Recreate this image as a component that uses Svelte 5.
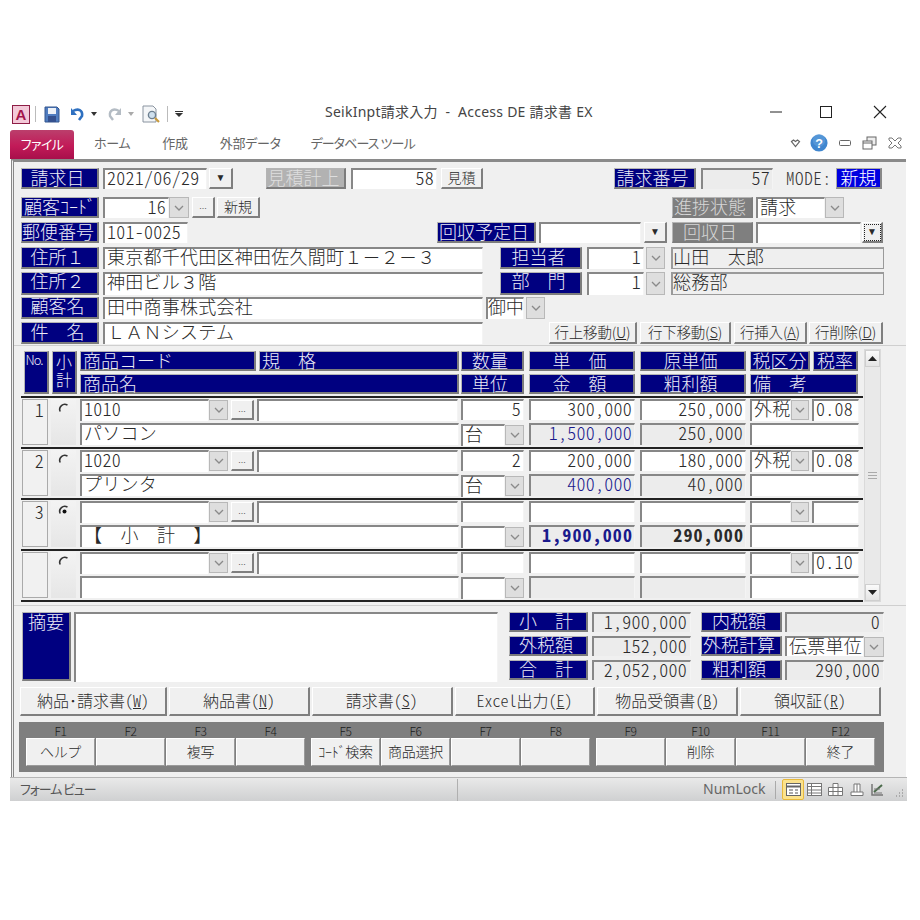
<script>
  const rows = [
    { no: '1', code: '1010', name: 'パソコン', qty: '5', unit: '台', price: '300,000', cost: '250,000', amount: '1,500,000', gross: '250,000', tax: '外税', rate: '0.08' },
    { no: '2', code: '1020', name: 'プリンタ', qty: '2', unit: '台', price: '200,000', cost: '180,000', amount: '400,000', gross: '40,000', tax: '外税', rate: '0.08' },
    { no: '3', code: '', name: '【　小　計　】', qty: '', unit: '', price: '', cost: '', amount: '1,900,000', gross: '290,000', tax: '', rate: '', sub: true, on: true },
    { no: '', code: '', name: '', qty: '', unit: '', price: '', cost: '', amount: '', gross: '', tax: '', rate: '0.10' }
  ];
  const prints = [
    { t: '納品･請求書', k: 'W' }, { t: '納品書', k: 'N' }, { t: '請求書', k: 'S' },
    { t: 'Excel出力', k: 'E' }, { t: '物品受領書', k: 'B' }, { t: '領収証', k: 'R' }
  ];
  const fkeys = [
    [['F1', 'ヘルプ'], ['F2', ''], ['F3', '複写'], ['F4', '']],
    [['F5', 'ｺｰﾄﾞ検索'], ['F6', '商品選択'], ['F7', ''], ['F8', '']],
    [['F9', ''], ['F10', '削除'], ['F11', ''], ['F12', '終了']]
  ];
</script>

{#snippet dd()}
  <span class="dd"><svg width="10" height="6" viewBox="0 0 10 6"><path d="M1 1l4 4 4-4" fill="none" stroke="#8a8a8a" stroke-width="1.3"/></svg></span>
{/snippet}
{#snippet radio(on)}
  <svg class="radio" width="12" height="12" viewBox="0 0 12 12">
    <path d="M9.5 2.2A5 5 0 0 0 2.2 8.5" fill="none" stroke="#333" stroke-width="1.6"/>
    {#if on}<circle cx="6.5" cy="6.5" r="2" fill="#111"/>{/if}
  </svg>
{/snippet}
{#snippet dots()}
  <span class="btn small">...</span>
{/snippet}

<div class="win">
  <header class="title">
    <div class="qat">
      <span class="appicon">A</span>
      <i class="qsep"></i>
      <svg width="16" height="17" viewBox="0 0 16 17"><path d="M1 1h12l2 2v13H1z" fill="#4f7cc0" stroke="#34568e"/><rect x="4" y="2" width="8" height="6" fill="#eef2f8"/><rect x="4" y="10" width="8" height="6" fill="#34508e"/></svg>
      <svg class="undo" width="15" height="14" viewBox="0 0 15 14"><path d="M3 4c5-3 10-1 9 5l-3 4" fill="none" stroke="#2e70c0" stroke-width="2.6"/><path d="M1 1v7h6z" fill="#2e70c0"/></svg>
      <svg class="tri" width="6" height="4" viewBox="0 0 6 4"><path d="M0 0h6L3 4z" fill="#333"/></svg>
      <svg class="redo" width="15" height="14" viewBox="0 0 15 14"><path d="M12 4C7 1 2 3 3 9l3 4" fill="none" stroke="#b4bcc4" stroke-width="2.4"/><path d="M14 1v7H8z" fill="#b4bcc4"/></svg>
      <svg class="tri light" width="6" height="4" viewBox="0 0 6 4"><path d="M0 0h6L3 4z" fill="#aaa"/></svg>
      <svg class="prev" width="19" height="18" viewBox="0 0 19 18"><path d="M1 1h10l3 3v13H1z" fill="#f4f6f8" stroke="#8a94a0"/><circle cx="10" cy="10" r="3.6" fill="#cfe0ee" stroke="#6d7f90" stroke-width="1.4"/><path d="M13 13l4 4" stroke="#c89a3c" stroke-width="2.2"/></svg>
      <i class="qsep two"></i>
      <svg class="more" width="8" height="6" viewBox="0 0 8 6"><path d="M0 0h8v1H0zM0 2h8L4 6z" fill="#333"/></svg>
    </div>
    <span class="caption">SeikInpt請求入力&nbsp; - &nbsp;Access DE 請求書 EX</span>
    <div class="wctl">
      <svg width="14" height="14" viewBox="0 0 14 14"><path d="M1 7h12" stroke="#222"/></svg>
      <svg width="14" height="14" viewBox="0 0 14 14"><rect x="1.5" y="1.5" width="11" height="11" fill="none" stroke="#222"/></svg>
      <svg width="14" height="14" viewBox="0 0 14 14"><path d="M1 1l12 12M13 1L1 13" stroke="#222" stroke-width="1.1"/></svg>
    </div>
  </header>

  <nav class="tabs">
    <span class="file">ファイル</span>
    <span class="tab t1">ホーム</span><span class="tab t2">作成</span><span class="tab t3">外部データ</span><span class="tab t4">データベース ツール</span>
    <div class="mctl">
      <svg class="heart" width="11" height="9" viewBox="0 0 11 9"><path d="M1.5 2.5 3.5 1 5.5 2.5 7.500 1 9.500 2.500 5.500 7.500z" fill="#fff" stroke="#666" stroke-width="1.2"/></svg>
      <svg class="help" width="18" height="18" viewBox="0 0 20 20"><circle cx="10" cy="10" r="9.500" fill="#3f86cf"/><circle cx="10" cy="7" r="7" fill="#6aa6e0" opacity=".5"/><text x="10" y="15" text-anchor="middle" font-size="14" font-weight="700" fill="#fff" font-family="Liberation Sans">?</text></svg>
      <svg width="12" height="8" viewBox="0 0 12 8"><rect x=".5" y="1.500" width="11" height="5" rx="1" fill="#fff" stroke="#666"/></svg>
      <svg width="15" height="14" viewBox="0 0 15 14"><rect x="5" y="1" width="9" height="8" fill="#eee" stroke="#666"/><rect x="1" y="5" width="9" height="8" fill="#fff" stroke="#666"/><path d="M1 7h9" stroke="#666"/></svg>
      <svg width="14" height="12" viewBox="0 0 14 12"><path d="M1 1h3l3 3 3-3h3v2l-3 3 3 3v2h-3L7 8l-3 3H1V9l3-3-3-3z" fill="#fff" stroke="#777"/></svg>
    </div>
  </nav>

  <main class="form">
    <section class="head">
      <div class="row r1">
        <span class="lbl">請求日</span><i></i><span class="inp">2021/06/29</span><i></i><span class="btn arrow">▼</span><i></i>
        <span class="lbl faint">見積計上</span><i></i><span class="inp right">58</span><i></i><span class="btn b14">見積</span><i></i>
        <span class="lbl">請求番号</span><i></i><span class="inp right grayf">57</span><i></i><span class="mode">MODE:</span><i></i><span class="lbl bright">新規</span>
      </div>
      <div class="row r2">
        <span class="lbl hw">顧客ｺｰﾄﾞ</span><i></i><span class="inp right">16</span>{@render dd()}<i></i>{@render dots()}<i></i><span class="btn b14">新規</span><i></i>
        <span class="lbl gray">進捗状態</span><i></i><span class="inp">請求</span>{@render dd()}
      </div>
      <div class="row r3">
        <span class="lbl">郵便番号</span><i></i><span class="inp">101-0025</span><i></i>
        <span class="lbl">回収予定日</span><i></i><span class="inp"></span><i></i><span class="btn arrow">▼</span><i></i>
        <span class="lbl gray">回収日</span><i></i><span class="inp"></span><i></i><span class="btn arrow focus">▼</span>
      </div>
      <div class="row r4">
        <span class="lbl">住所１</span><i></i><span class="inp fw">東京都千代田区神田佐久間町１－２－３</span><i></i>
        <span class="lbl">担当者</span><i></i><span class="inp right">1</span><i></i>{@render dd()}<i></i><span class="ro">山田　太郎</span>
      </div>
      <div class="row r4">
        <span class="lbl">住所２</span><i></i><span class="inp fw">神田ビル３階</span><i></i>
        <span class="lbl">部　門</span><i></i><span class="inp right">1</span><i></i>{@render dd()}<i></i><span class="ro">総務部</span>
      </div>
      <div class="row r6">
        <span class="lbl">顧客名</span><i></i><span class="inp fw">田中商事株式会社</span><i></i><span class="inp tight">御中</span><i></i>{@render dd()}
      </div>
      <div class="row r7">
        <span class="lbl">件　名</span><i></i><span class="inp fw">ＬＡＮシステム</span><i></i>
        <span class="btn b15">行上移動(<u>U</u>)</span><i></i><span class="btn b15">行下移動(<u>S</u>)</span><i></i><span class="btn b15">行挿入(<u>A</u>)</span><i></i><span class="btn b15">行削除(<u>D</u>)</span>
      </div>
    </section>

    <section class="detail">
      <div class="table">
        <div class="thead">
          <span class="lbl no">No.</span>
          <span class="lbl sk">小<br>計</span>
          <div class="cA">
            <div class="pair"><span class="lbl left codeh">商品コード</span><span class="lbl left spech">規　格</span></div>
            <span class="lbl left">商品名</span>
          </div>
          <div class="cQ"><span class="lbl">数量</span><span class="lbl">単位</span></div>
          <div class="cP"><span class="lbl">単　価</span><span class="lbl">金　額</span></div>
          <div class="cC"><span class="lbl">原単価</span><span class="lbl">粗利額</span></div>
          <div class="cT">
            <div class="pair"><span class="lbl taxh">税区分</span><span class="lbl rateh">税率</span></div>
            <span class="lbl left">備　考</span>
          </div>
        </div>

        {#each rows as r}
          <div class="trow">
            <span class="nobox">{r.no}</span>
            <span class="rad">{@render radio(r.on)}</span>
            <div class="cA">
              <div class="line">
                <span class="inp code">{r.code}</span>{@render dd()}{@render dots()}<span class="inp spec"></span>
              </div>
              <span class="inp fw">{r.name}</span>
            </div>
            <div class="cQ">
              <span class="inp right">{r.qty}</span>
              <div class="line"><span class="inp fill">{r.unit}</span>{@render dd()}</div>
            </div>
            <div class="cP">
              <span class="inp right">{r.price}</span>
              <span class="inp right grayf navy" class:bold={r.sub}>{r.amount}</span>
            </div>
            <div class="cC">
              <span class="inp right">{r.cost}</span>
              <span class="inp right grayf" class:bold={r.sub}>{r.gross}</span>
            </div>
            <div class="cT">
              <div class="line"><span class="inp tax">{r.tax}</span>{@render dd()}<span class="inp rate">{r.rate}</span></div>
              <span class="inp"></span>
            </div>
          </div>
        {/each}
      </div>
      <div class="scroll">
        <span class="sbtn"><svg width="9" height="5" viewBox="0 0 9 5"><path d="M0 5L4.500 0 9 5z" fill="#222"/></svg></span>
        <span class="grip"><b></b><b></b><b></b></span>
        <span class="sbtn"><svg width="9" height="5" viewBox="0 0 9 5"><path d="M0 0L4.500 5 9 0z" fill="#222"/></svg></span>
      </div>
    </section>

    <section class="foot">
      <span class="lbl memo">摘要</span>
      <span class="inp memotext"></span>
      <div class="sum">
        <span class="lbl">小　計</span><i></i><span class="inp right grayf">1,900,000</span><i></i><span class="lbl">内税額</span><i></i><span class="inp right grayf">0</span>
        <span class="lbl">外税額</span><i></i><span class="inp right grayf">152,000</span><i></i><span class="lbl">外税計算</span><i></i><div class="line"><span class="inp fill">伝票単位</span>{@render dd()}</div>
        <span class="lbl">合　計</span><i></i><span class="inp right grayf">2,052,000</span><i></i><span class="lbl">粗利額</span><i></i><span class="inp right grayf">290,000</span>
      </div>
    </section>

    <div class="prints">
      {#each prints as p}
        <span class="btn b16">{p.t}(<u>{p.k}</u>)</span>
      {/each}
    </div>

    <div class="fkeys">
      {#each fkeys as group}
        <div class="fgroup">
          {#each group as [k, t]}
            <div class="fkey"><small>{k}</small><span class="btn fb">{t}</span></div>
          {/each}
        </div>
      {/each}
    </div>
  </main>

  <footer class="status">
    <span class="stext">フォーム ビュー</span>
    <i class="ssep"></i>
    <span class="num">NumLock</span>
    <i class="ssep2"></i>
    <div class="views">
      <span class="vw active"><svg width="15" height="13" viewBox="0 0 15 13"><rect x=".5" y=".5" width="14" height="12" fill="#fff" stroke="#666"/><path d="M.5 3.500h14" stroke="#666" stroke-width="2"/><path d="M3 7h4M9 7h3M3 10h4M9 10h3" stroke="#555"/></svg></span>
      <span class="vw"><svg width="15" height="13" viewBox="0 0 15 13"><rect x=".5" y=".5" width="14" height="12" fill="#fff" stroke="#777"/><path d="M.5 3.500h14M.5 7h14M.5 10h14M4.500 1v11" stroke="#777"/></svg></span>
      <span class="vw"><svg width="15" height="13" viewBox="0 0 15 13"><path d="M5 .5h5v4h4.500v8H.5v-8H5zM.5 8.500h14M5 4.500h5M5 4.500v8M10 4.500v8" fill="#fff" stroke="#777"/></svg></span>
      <span class="vw"><svg width="14" height="13" viewBox="0 0 14 13"><path d="M1 12.500V9h3V1h6v8h3v3.500zM4 9h6M7 1v8" fill="#fff" stroke="#777"/></svg></span>
      <span class="vw"><svg width="15" height="13" viewBox="0 0 15 13"><path d="M2 1v11h11" fill="none" stroke="#777" stroke-width="1.500"/><path d="M4 9l8-7" stroke="#4a6a4a" stroke-width="2"/><path d="M4 6h6M4 10h8" stroke="#777"/></svg></span>
    </div>
    <svg class="resize" width="10" height="12" viewBox="0 0 10 12"><path d="M8 2h1M5 5h1M8 5h1M2 8h1M5 8h1M8 8h1" stroke="#aaa" stroke-width="2"/></svg>
  </footer>
</div>

<style>
  :global(body) { background: #fff; margin: 0; }
  .win {
    --jp: "Noto Sans CJK JP", sans-serif;
    margin: 100px 0 0 10px;
    width: 897px;
    height: 701px;
    display: flex;
    flex-direction: column;
    font-family: var(--jp);
  }
  i { display: block; }

  .title { height: 28px; display: flex; align-items: center; position: relative; background: #fff; }
  .qat { display: flex; align-items: center; padding-left: 2px; }
  .appicon {
    width: 16px; height: 17px; border: 1px solid #8e1d46; background: #f3c9d8; color: #a3154c;
    font: 700 15px/17px "Liberation Sans", sans-serif; text-align: center;
  }
  .qsep { width: 1px; height: 16px; background: #bbb; margin: 0 8px 0 5px; }
  .qsep.two { margin: 0 5px 0 6px; }
  .undo { margin-left: 10px; }
  .tri { margin-left: 6px; }
  .redo { margin-left: 10px; }
  .prev { margin-left: 8px; }
  .tri.light { margin-left: 6px; }
  .more { margin-left: 2px; }
  .caption {
    position: absolute; left: 315px; top: 2px; font: 14px/20px "Noto Sans", "Noto Sans CJK JP", sans-serif; color: #444;
    letter-spacing: .25px; white-space: nowrap;
  }
  .wctl { position: absolute; right: 20px; top: 5px; display: flex; gap: 40px; }
  .wctl svg:first-child { margin-right: -4px; }

  .tabs { height: 31px; display: flex; align-items: center; position: relative; font-size: 13px; color: #666; font-feature-settings: "palt"; letter-spacing: -.3px; background: #fff; }
  .file {
    width: 64px; height: 29px; margin-top: 2px; border-radius: 3px 3px 0 0; color: #fff; font-size: 13px; line-height: 28px; text-align: center;
    background: linear-gradient(#bb3f6c, #c21a58 55%, #a80f4b); letter-spacing: -.6px;
  }
  .tab { margin-bottom: 2px; }
  .t1 { margin-left: 20px; }
  .t2 { margin-left: 32px; }
  .t3 { margin-left: 32px; }
  .t4 { margin-left: 30px; letter-spacing: -.9px; }
  .mctl { position: absolute; left: 780px; top: 6px; display: flex; align-items: center; gap: 11px; width: 114px; }
  .heart { margin-right: -2px; }

  .form {
    height: 618px; margin-left: 1px; border-top: 3px solid #8a8a8a; border-left: 3px double #888; background: #f0f0f0;
    color: #2a2a2a; font-size: 18px; line-height: 17px; letter-spacing: .25px; font-weight: 300;
    box-sizing: border-box; width: 895px;
  }
  .head { padding-left: 7px; height: 184px; border-bottom: 1px solid #cfcfcf; box-sizing: border-box; display: flex; flex-direction: column; }
  .row { display: grid; height: 21px; margin-top: 4px; }
  .r1 { margin-top: 6px; grid-template-columns: 78px 4px 104px 2px 24px 33px 80px 5px 86px 4px 42px 131px 82px 5px 72px 13px 47px 3px 46px; }
  .r2 { margin-top: 8px; grid-template-columns: 78px 4px 66px 20px 3px 23px 2px 43px 412px 81px 3px 69px 19px; }
  .r3 { grid-template-columns: 78px 4px 85px 249px 99px 3px 102px 3px 23px 5px 81px 3px 105px 1px 21px; }
  .r4 { height: 22px; grid-template-columns: 78px 4px 380px 17px 82px 5px 57px 2px 19px 6px 213px; }
  .r4 + .r4 { margin-top: 3px; height: 23px; }
  .r6 { height: 22px; margin-top: 2px; grid-template-columns: 78px 4px 380px 3px 38px 2px 19px; }
  .r7 { height: 22px; margin-top: 3px; grid-template-columns: 78px 4px 380px 66px 88px 3px 91px 3px 73px 2px 74px; }

  .lbl {
    background: #000080; color: #ececf6; text-align: center; white-space: nowrap;
    border-style: solid; border-width: 1px 2px 2px 1px; border-color: #b4b4b4 #7c7c7c #7c7c7c #b4b4b4;
    box-sizing: border-box; line-height: 16px; min-width: 0; letter-spacing: 0; padding-right: 4px;
  }
  .lbl.left { text-align: left; padding: 0 0 0 2px; }
  .lbl.gray { background: #7f7f7f; color: #d6d6d6; }
  .lbl.faint { background: #b2b2b2; color: #dedede; }
  .lbl.bright { background: #0000e0; color: #fff; border-color: #aaa #888 #888 #aaa; padding: 0; }
  .lbl.hw { text-align: left; padding: 0 0 0 2px; }

  .inp {
    background: #fff; border-style: solid; border-width: 2px 0 0 2px; border-color: #878787; box-sizing: border-box;
    padding-left: 2px; white-space: nowrap; line-height: 15px; min-width: 0; display: block; border-right: 1px solid #f4f4f4;
    font-feature-settings: "hwid";
  }
  .fw { font-feature-settings: normal; }
  .r4 + .r4 .inp, .r6 .inp { line-height: 14px; }
  .r4 + .r4 .lbl, .r6 .lbl, .sum .lbl { line-height: 15px; }
  .tight { padding-left: 0; letter-spacing: -.3px; }
  .right { text-align: right; padding: 0 2px 0 0; }
  .grayf { background: #ececec; }
  .navy { color: #1a1a8c; }
  .inp.bold { font-weight: 700; letter-spacing: 1.1px; padding-right: 1px; }
  .mode { font-size: 17px; line-height: 19px; white-space: nowrap; letter-spacing: .6px; font-feature-settings: "hwid"; color: #333; }
  .ro { border: 1px solid #9a9a9a; border-width: 2px 1px 1px 2px; box-sizing: border-box; background: #efefef; padding-left: 0; white-space: nowrap; line-height: 15px; }

  .btn {
    background: #f0f0f0; border-style: solid; border-width: 1px 2px 2px 1px; border-color: #fff #7f7f7f #7f7f7f #fff; box-sizing: border-box;
    text-align: center; white-space: nowrap; letter-spacing: 0; display: block; min-width: 0;
  }
  .arrow { font-size: 10px; line-height: 17px; font-family: "DejaVu Sans", sans-serif; }
  .focus { outline: 1px dotted #222; outline-offset: -3px; }
  .b14 { font-size: 14px; line-height: 16px; }
  .b15 { font-size: 14.500px; line-height: 17px; letter-spacing: -.2px; font-feature-settings: normal; }
  .b16 { font-size: 16px; line-height: 24px; flex: 1; font-feature-settings: "hwid"; }
  .small { font-size: 10px; line-height: 14px; color: #555; width: 23px; flex: none; }

  .dd {
    background: #dedede; border: 1px solid #b8b8b8; box-sizing: border-box; display: flex; align-items: center; justify-content: center; flex: none; width: 20px;
  }
  .r2 .dd, .r4 .dd, .r6 .dd { width: 100%; }

  .detail { display: flex; height: 259px; padding-left: 7px; box-sizing: border-box; }
  .table { width: 842px; }
  .thead { display: flex; padding: 5px 0 0 3px; box-sizing: border-box; height: 50px; }
  .thead .lbl { height: 20px; }
  .cA, .cQ, .cP, .cC, .cT { display: flex; flex-direction: column; justify-content: space-between; box-sizing: border-box; }
  .thead .cA, .thead .cQ, .thead .cP, .thead .cC, .thead .cT { height: 43px; }
  .cA { width: 379px; margin-left: 3px; }
  .cQ { width: 63px; margin-left: 2px; }
  .cP { width: 106px; margin-left: 5px; }
  .cC { width: 106px; margin-left: 5px; }
  .cT { width: 109px; margin-left: 4px; }
  .thead .cT { width: 108px; }
  .pair { display: flex; justify-content: space-between; }
  .codeh { width: 176px; }
  .spech { width: 200px; }
  .taxh { width: 60px; padding: 0; }
  .rateh { width: 45px; padding: 0; }
  .thead .lbl.no { width: 25px; height: 43px; font-size: 13px; letter-spacing: -1px; padding-right: 4px; line-height: 16px; }
  .thead .lbl.sk { width: 25px; height: 43px; margin-left: 3px; font-size: 16px; line-height: 18px; padding: 0; }

  .trow { display: flex; height: 51px; border-top: 2px solid #222; padding: 1px 0 0 1px; box-sizing: border-box; }
  .trow:last-child { height: 53px; border-bottom: 2px solid #222; }
  .nobox { width: 26px; height: 46px; box-sizing: border-box; border: 1px solid #aaa; background: #f1f1f1; text-align: right; padding-right: 3px; line-height: 18px; font-feature-settings: "hwid"; }
  .rad { width: 25px; height: 46px; margin-left: 3px; background: linear-gradient(#f3f3f3, #e6e6e6); padding: 4px 0 0 7px; box-sizing: border-box; }
  .radio { display: block; }
  .trow .cA { width: 379px; margin-left: 4px; }
  .trow .cA, .trow .cQ, .trow .cP, .trow .cC, .trow .cT { height: 46px; }
  .trow .inp { height: 22px; }
  .trow .cQ > .inp:first-child, .trow .cP > .inp:first-child, .trow .cC > .inp:first-child { height: 21px; }
  .line { display: flex; min-width: 0; height: 21px; }
  .line .dd { height: 20px; margin-top: 1px; }
  .code { width: 129px; }
  .line .small { margin: 1px 3px 0 3px; height: 20px; }
  .spec { width: 201px; }
  .fill { flex: 1; }
  .tax { width: 41px; }
  .line .dd { width: 19px; flex: none; }
  .trow .cT .dd { width: 18px; }
  .rate { margin-left: 3px; width: 47px; }

  .scroll { width: 17px; margin: 3px 0 0 1px; height: 253px; background: #e9e9e9; display: flex; flex-direction: column; justify-content: space-between; align-items: stretch; box-sizing: border-box; border: 1px solid #dadada; }
  .sbtn { height: 17px; background: linear-gradient(#fbfbfb, #e4e4e4); border: 1px solid #cfcfcf; box-sizing: border-box; display: flex; align-items: center; justify-content: center; }
  .grip { display: flex; flex-direction: column; gap: 2px; padding: 0 3px; }
  .grip b { height: 1px; background: #aaa; }

  .foot { display: flex; padding: 6px 0 0 8px; height: 77px; box-sizing: border-box; border-top: 1px solid #cfcfcf; }
  .memo { width: 49px; height: 69px; padding: 0; }
  .memotext { width: 424px; height: 70px; margin-left: 3px; }
  .sum { display: grid; margin-left: 11px; grid-template-columns: 79px 4px 99px 10px 81px 3px 99px; grid-template-rows: repeat(3, 20px); row-gap: 4px; }
  .sum .line { height: 20px; }
  .sum .dd { width: 20px; }
  .sum .right { padding-right: 3px; }

  .prints { display: flex; gap: 2px; padding: 5px 0 0 6px; width: 867px; height: 40px; box-sizing: border-box; align-items: flex-start; }
  .prints .btn { height: 29px; background: #f0f0f0; }
  .prints .btn:first-child { flex: none; width: 147px; }

  .fkeys { margin: 0 0 0 5px; width: 865px; height: 50px; background: #7f7f7f; display: flex; padding: 1px 0 0 7px; box-sizing: border-box; gap: 6px; }
  .fgroup { display: flex; gap: 1px; }
  .fkey { width: 69px; display: flex; flex-direction: column; align-items: stretch; }
  .fkey small { font-size: 12px; line-height: 15px; text-align: center; color: #1a1a1a; letter-spacing: -.3px; }
  .fb { height: 28px; font-size: 14px; line-height: 24px; border-width: 1px; border-color: #fff #9a9a9a #9a9a9a #fff; letter-spacing: -.3px; }

  .status {
    height: 24px; display: flex; align-items: center; background: linear-gradient(#e9e9e9, #cfd0d1); position: relative;
    border-top: 1px solid #b5b5b5; box-sizing: border-box; color: #555;
  }
  .stext { margin: 0 0 2px 10px; font-size: 13px; width: 437px; font-feature-settings: "palt"; letter-spacing: -1.1px; }
  .ssep { width: 1px; height: 22px; background: #b0b0b0; }
  .num { margin: 0 0 2px 245px; font: 14px "Noto Sans", sans-serif; color: #666; width: 63px; letter-spacing: 0; }
  .ssep2 { width: 1px; height: 18px; background: #aaa; margin: 0 6px 0 9px; }
  .views { display: flex; align-items: center; }
  .vw { width: 21px; height: 21px; display: flex; align-items: center; justify-content: center; }
  .active { background: #fbe28c; border: 1px solid #e8b93c; border-radius: 2px; box-sizing: border-box; width: 22px; }
  .resize { position: absolute; right: 3px; bottom: 1px; }
</style>
